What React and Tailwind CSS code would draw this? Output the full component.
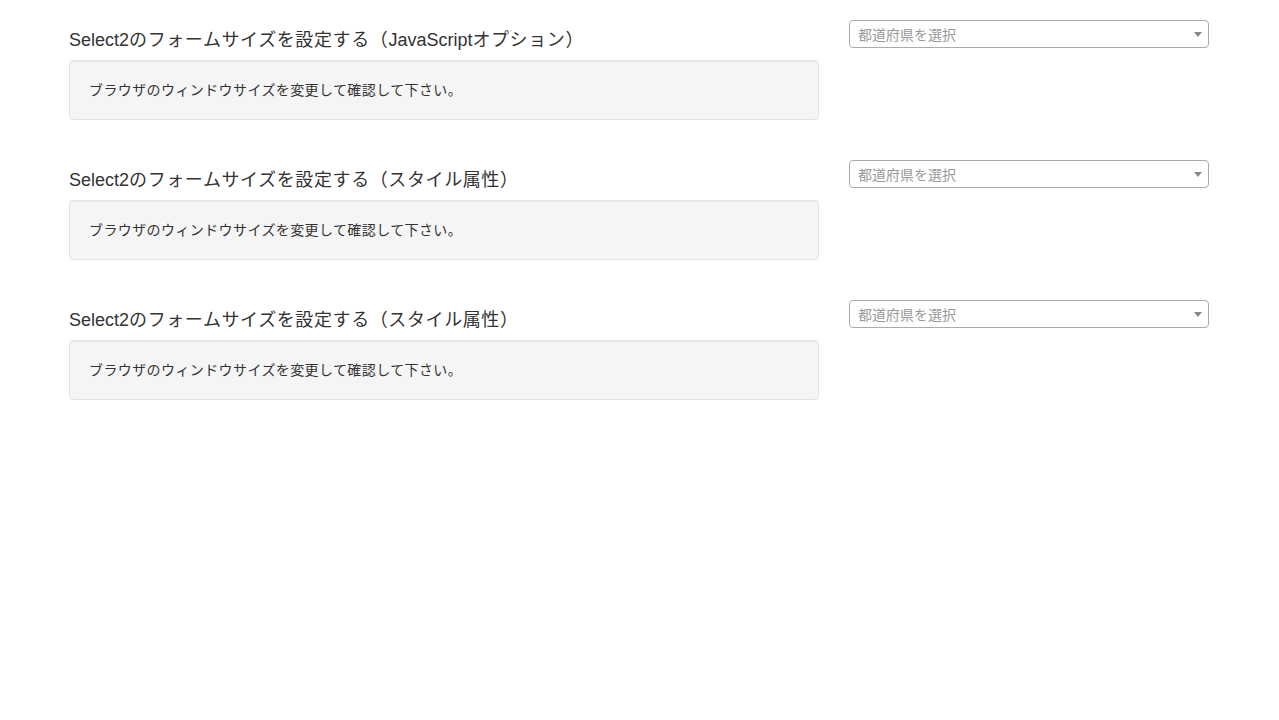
export default function App() {
  const rows = [
    ["Select2", "のフォームサイズを設定する（", "JavaScript", "オプション）"],
    ["Select2", "のフォームサイズを設定する（スタイル属性）", "", ""],
    ["Select2", "のフォームサイズを設定する（スタイル属性）", "", ""],
  ];
  return (
    <div
      className="min-h-[720px] bg-white text-[#333] text-[14px]"
      style={{ fontFamily: '"Liberation Sans", Arial, "Noto Sans CJK JP", sans-serif' }}
    >
      <div className="ml-[54px] w-[1170px]">
        {rows.map((t, i) => (
          <div key={i} className="flex pt-5">
            <div className="w-[780px] px-[15px]">
              <h4 className="mt-[10px] mb-[9px] text-[18px] leading-[21px] font-normal text-[#333]">
                <span>{t[0]}</span>
                <span className="tracking-[0.6px]">{t[1]}</span>
                <span>{t[2]}</span>
                <span className="tracking-[0.6px]">{t[3]}</span>
              </h4>
              <div className="h-[60px] rounded-[4px] border border-[#e3e3e3] bg-[#f5f5f5] px-[19px] py-[19px] shadow-[inset_0_1px_1px_rgba(0,0,0,0.05)] leading-[20px] tracking-[0.4px]">
                ブラウザのウィンドウサイズを変更して確認して下さい。
              </div>
              <div className="h-5" />
            </div>
            <div className="w-[390px] px-[15px]">
              <div className="flex h-[28px] items-center rounded-[4px] border border-[#aaa] bg-white pl-2 pr-[6px]">
                <span className="flex-1 pt-[2px] leading-[26px] text-[#999]">都道府県を選択</span>
                <span className="h-0 w-0 border-x-[4px] border-t-[5px] border-x-transparent border-t-[#888]" />
              </div>
            </div>
          </div>
        ))}
      </div>
    </div>
  );
}
